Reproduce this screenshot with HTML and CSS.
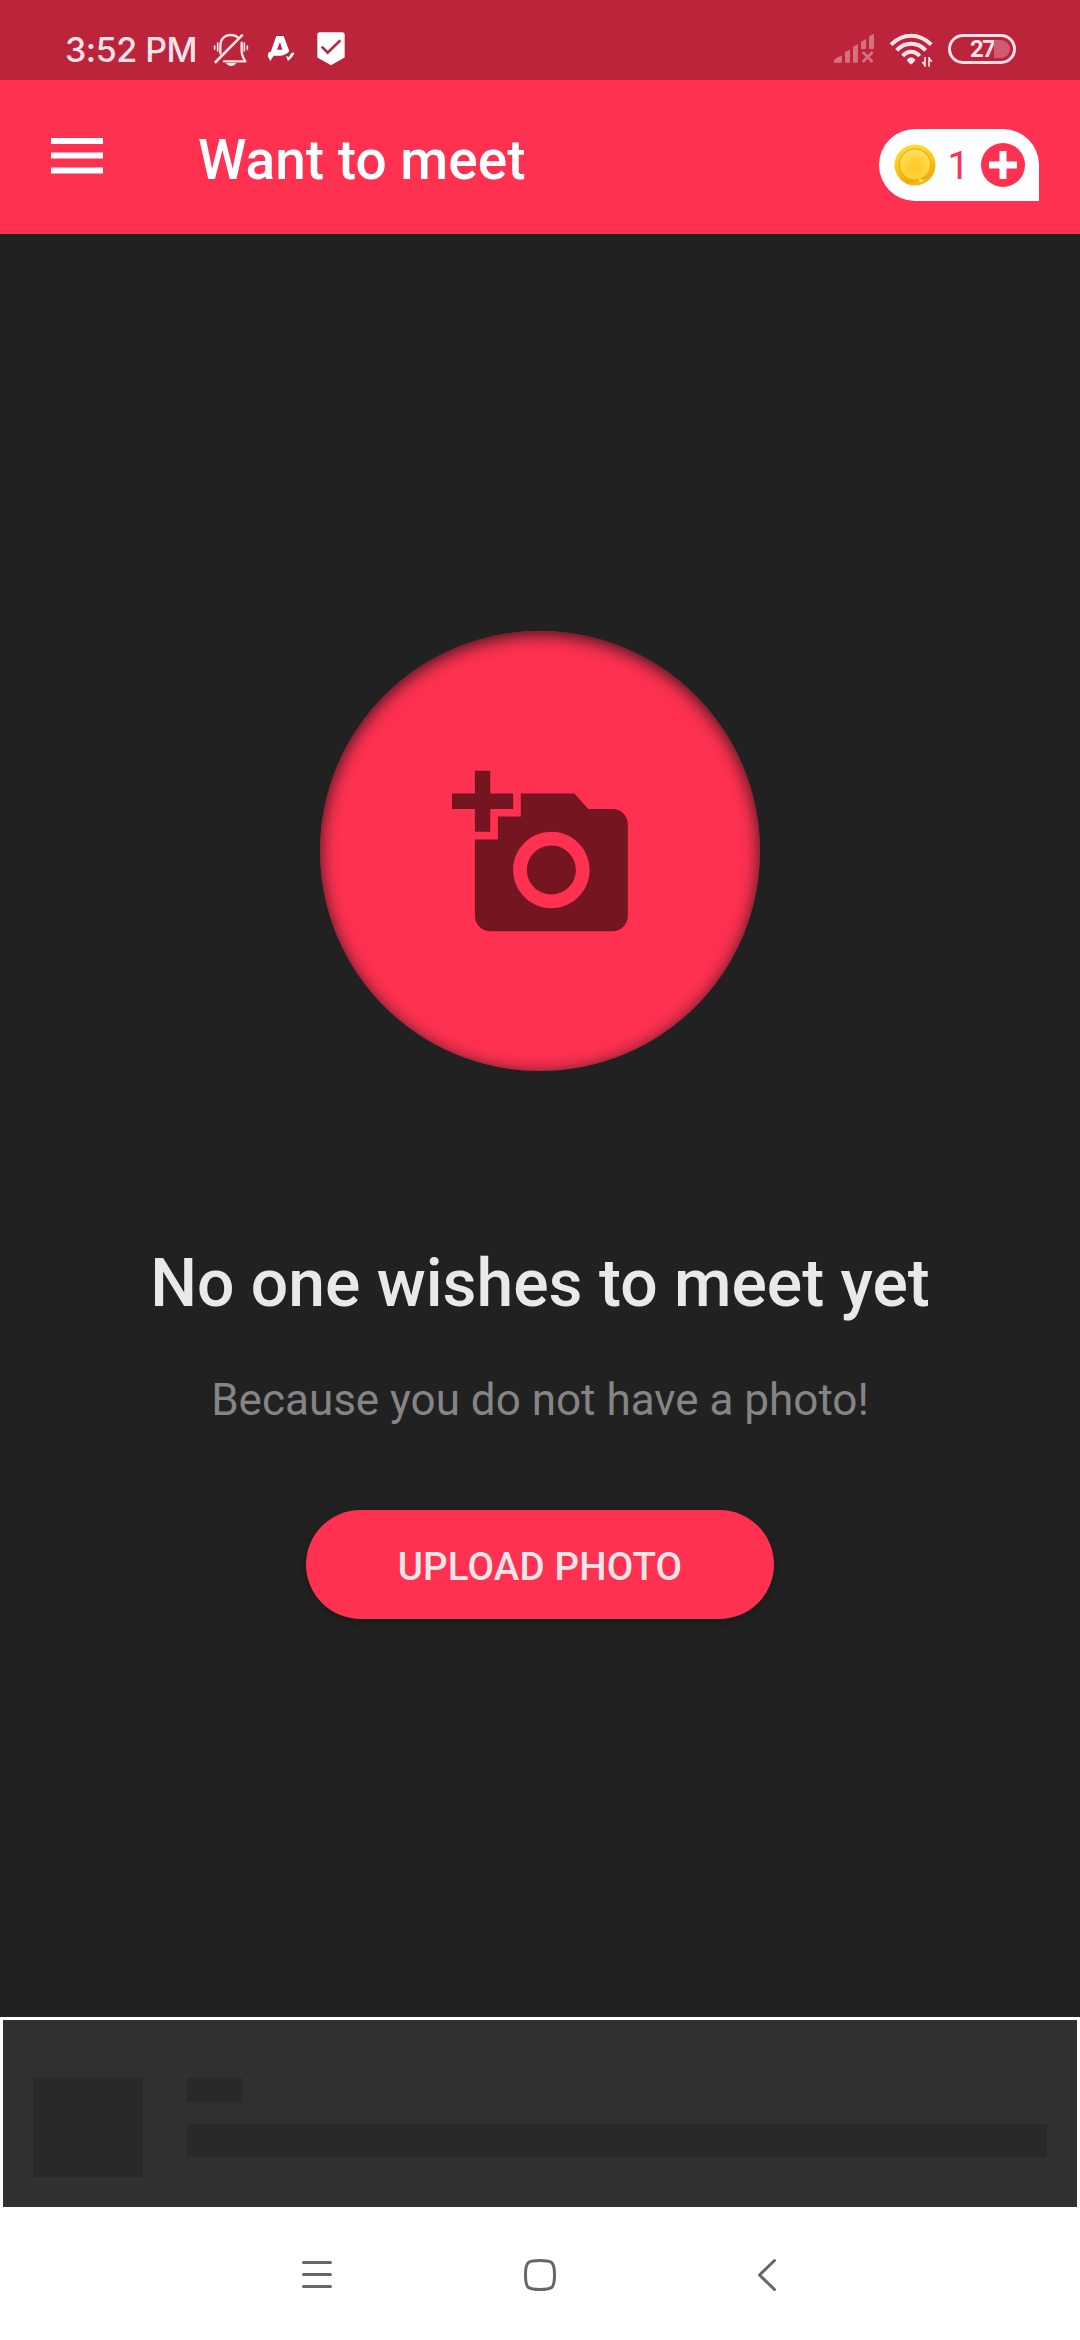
FILE: index.html
```html
<!DOCTYPE html>
<html lang="en">
<head>
<meta charset="utf-8">
<title>Want to meet</title>
<link rel="stylesheet" href="styles.css">
</head>
<body>
<div class="screen">
  <div class="status-bar">
    <div class="status-left">
      <span class="clock">3:52 PM</span>
      <svg class="icon-bell" viewBox="516 90 114 114" fill="none" stroke="#fde3e8" stroke-width="7" stroke-linecap="round" stroke-linejoin="round">
        <path d="M541 160V138C541 118 553 105 573 105C581 105 587 107 592 111M605 128V154C605 167 609 173 616 184H552"/>
        <path d="M527 186L606 106" stroke-width="8"/>
        <path d="M524 138v10M533 129v24M613 129v24M622 138v10" stroke-width="5"/>
        <path d="M558 189H589Q584 198 573 198Q563 198 558 189z" fill="#fde3e8" stroke="none"/>
      </svg>
      <svg class="icon-app" viewBox="678 90 90 114" fill="#fff">
        <path fill-rule="evenodd" d="M709 108H731L748 154Q738 166 722 167H701L691 183L683 168L686 157L692 156zM720 126L711 149H727z"/>
        <path d="M738 168L747 171L755 158H764L756 172L744 183z"/>
      </svg>
      <svg class="icon-shield" viewBox="828 90 90 114">
        <path d="M840 97H906Q914 97 914 105V170Q914 173 910 175L873 196L836 175Q832 173 832 170V105Q832 97 840 97z" fill="#fff"/>
        <path d="M845 140L863 158L901 121" fill="none" stroke="#bb243b" stroke-width="8"/>
      </svg>
    </div>
    <div class="status-right">
      <svg class="icon-signal" viewBox="99 90 126 114" fill="#d66f80">
        <path d="M102 188V180Q112 169 126 167V185Q126 188 123 188zM135 188V156L150 149V185Q150 188 147 188zM159 188V140L174 132V185Q174 188 171 188zM183 147V125L198 117V144Q198 147 195 147zM207 147V109L222 101V144Q222 147 219 147z"/>
        <path d="M188 156L218 186M218 156L188 186" stroke="#d66f80" stroke-width="8" fill="none"/>
      </svg>
      <svg class="icon-wifi" viewBox="267 90 135 114" fill="none" stroke="#fde3e8" stroke-width="12">
        <path d="M273 134Q300 107 333 107Q367 107 394 134M290 151Q308 131 333 131Q359 131 377 151M308 168Q319 155 333 155Q348 155 359 168"/>
        <path d="M320 180Q326 172 333 172Q341 172 347 180L336 192Q333 194 330 192z" fill="#fde3e8" stroke="none"/>
        <path d="M375 171V200M387 171V200M367 185L375 196M395 185L387 174" stroke-width="5"/>
      </svg>
      <div class="battery"><span class="battery-level">27</span><span class="battery-fill"></span></div>
    </div>
  </div>

  <header class="app-bar">
    <svg class="menu" viewBox="0 0 48 36" preserveAspectRatio="none" fill="#fff"><path d="M0 0H48V6H0zM0 14.500H48V20.500H0zM0 29.500H48V35.500H0z"/></svg>
    <h1 class="title">Want to meet</h1>
    <div class="coins">
      <svg class="coin" viewBox="0 0 42 42">
        <defs>
          <linearGradient id="rim" x1="0.3" y1="0" x2="0.6" y2="1"><stop offset="0" stop-color="#ffe03a"/><stop offset=".5" stop-color="#fbc512"/><stop offset=".85" stop-color="#f3a80e"/><stop offset="1" stop-color="#fbc21c"/></linearGradient>
          <radialGradient id="face" cx=".5" cy=".65" r=".65"><stop offset="0" stop-color="#ffc928"/><stop offset=".5" stop-color="#ffd23a"/><stop offset="1" stop-color="#ffe566"/></radialGradient>
        </defs>
        <circle cx="21" cy="21" r="20.5" fill="url(#rim)"/>
        <circle cx="21" cy="20.5" r="15.6" fill="url(#face)" stroke="#f0b010" stroke-width="1.2"/>
        <ellipse cx="27" cy="36.500" rx="2.200" ry="1.300" fill="#ffec8a"/>
      </svg>
      <span class="coin-count">1</span>
      <svg class="add" viewBox="0 0 44 44"><circle cx="22" cy="22" r="22" fill="#ff3151"/><path d="M18.5 8h7v10.500h10.500v7h-10.500v10.500h-7v-10.500h-10.500v-7h10.500z" fill="#fff"/></svg>
    </div>
  </header>

  <main class="content">
    <div class="photo-circle">
      <svg class="camera" viewBox="0 0 24 24" fill="#741521"><path fill-rule="evenodd" d="M3 4V1h2v3h3v2H5v3H3V6H0V4h3zm3 6V7h3V4h7l1.83 2H21c1.1 0 2 .9 2 2v12c0 1.100-.9 2-2 2H5c-1.100 0-2-.9-2-2V10h3zm7 9c2.760 0 5-2.240 5-5s-2.240-5-5-5-5 2.240-5 5 2.240 5 5 5zm-3.200-5c0 1.770 1.430 3.200 3.200 3.200s3.200-1.430 3.200-3.200-1.430-3.200-3.200-3.200-3.200 1.430-3.200 3.200z"/></svg>
    </div>
    <h2 class="headline">No one wishes to meet yet</h2>
    <p class="reason">Because you do not have a photo!</p>
    <button class="upload">UPLOAD PHOTO</button>
  </main>

  <div class="ad">
    <div class="ad-thumb"></div>
    <div class="ad-lines">
      <div class="ad-label"></div>
      <div class="ad-text"></div>
    </div>
  </div>

  <nav class="nav-bar">
    <svg viewBox="0 0 48 36" fill="none" stroke="#676767" stroke-width="3" stroke-linecap="round"><path d="M10.500 5.500H37.500M10.500 17.500H37.500M10.500 29.500H37.500"/></svg>
    <svg viewBox="0 0 48 36" fill="none" stroke="#676767" stroke-width="3"><path d="M24 3.500C36.500 3.500 38.500 5 38.500 18S36.500 32.500 24 32.500S9.500 31 9.500 18S11.500 3.500 24 3.500z"/></svg>
    <svg viewBox="0 0 48 36" fill="none" stroke="#676767" stroke-width="3" stroke-linecap="round" stroke-linejoin="round"><path d="M35.500 3.500L20.500 18L35.500 32.500"/></svg>
  </nav>
</div>
</body>
</html>
```

FILE: styles.css
```css
* { box-sizing: border-box; }
body { margin: 0; font-family: Roboto, "Liberation Sans", sans-serif; }
h1, h2, p { margin: 0; white-space: nowrap; }
svg { display: block; flex: none; }

.screen {
  width: 1080px;
  height: 2340px;
  display: flex;
  flex-direction: column;
  overflow: hidden;
  background: #212121;
}

.status-bar {
  height: 80px;
  flex: none;
  display: flex;
  justify-content: space-between;
  padding: 30px 64px 0 65px;
  background: #bb243b;
}
.status-left, .status-right { display: flex; height: 38px; }
.clock {
  width: 147px;
  font: 500 34px/40px Inter, sans-serif;
  letter-spacing: -0.5px;
  color: #fde3e8;
  white-space: nowrap;
}
.icon-bell { width: 38px; height: 38px; }
.icon-app { width: 30px; height: 38px; margin-left: 16px; }
.icon-shield { width: 30px; height: 38px; margin-left: 20px; }
.icon-signal { width: 42px; height: 38px; }
.icon-wifi { width: 45px; height: 38px; margin-left: 14px; }
.battery {
  width: 68px;
  height: 30px;
  margin: 4px 0 0 14px;
  border: 3px solid #fde3e8;
  border-radius: 15px;
  display: flex;
  align-items: center;
  padding-left: 19px;
}
.battery-level {
  width: 24px;
  font-size: 24px;
  font-weight: 700;
  line-height: 24px;
  letter-spacing: -1.6px;
  color: #fde3e8;
}
.battery-fill {
  width: 16px;
  height: 18px;
  border-radius: 0 9px 9px 0;
  background: #d05a6e;
}

.app-bar {
  height: 154px;
  flex: none;
  display: flex;
  align-items: flex-start;
  padding: 0 41px 0 48px;
  padding-left: 51px;
  background: #ff3151;
}
.menu { width: 52px; height: 36px; margin-top: 58px; }
.title {
  margin: 48px 0 0 95px;
  font-size: 55px;
  font-weight: 500;
  line-height: 64px;
  color: #fff;
}
.coins {
  width: 160px;
  height: 72px;
  margin: 49px 0 0 auto;
  padding: 0 14px 0 15px;
  display: flex;
  align-items: center;
  background: #fff;
  border-radius: 36px 36px 0 36px;
}
.coin { width: 42px; height: 42px; }
.coin-count {
  flex: 1;
  padding-top: 2px;
  text-align: center;
  font-size: 39px;
  line-height: 46px;
  color: #ff3151;
}
.add { width: 44px; height: 44px; }

.content {
  height: 1783px;
  flex: none;
  display: flex;
  flex-direction: column;
  align-items: center;
  padding-top: 397px;
}
.photo-circle {
  width: 440px;
  height: 440px;
  flex: none;
  padding: 132px 0 0 132px;
  border-radius: 50%;
  background: #ff3151;
  box-shadow: inset 0 3px 17px rgba(28, 18, 22, .9);
}
.camera { width: 183.500px; height: 183.500px; }
.headline {
  margin-top: 174px;
  font-size: 66px;
  font-weight: 500;
  line-height: 78px;
  color: #e9e9e9;
}
.reason {
  margin-top: 51px;
  font-size: 44px;
  line-height: 52px;
  color: #858585;
}
.upload {
  width: 468px;
  height: 109px;
  margin-top: 84px;
  padding: 4px 0 0;
  border: 0;
  border-radius: 55px;
  background: #ff3151;
  box-shadow: 0 3px 7px rgba(0, 0, 0, .25);
  font: 500 38.500px/46px Roboto, sans-serif;
  letter-spacing: 0.15px;
  color: #f2e4e7;
}

.ad {
  height: 190px;
  flex: none;
  display: flex;
  gap: 44px;
  padding: 58px 30px 0;
  border: 3px solid #fff;
  border-bottom: 0;
  background: #303030;
}
.ad-thumb { width: 110px; height: 99px; background: #28292b; }
.ad-lines { flex: 1; display: flex; flex-direction: column; gap: 22px; }
.ad-label { width: 55px; height: 24px; background: #28292b; }
.ad-text { height: 33px; background: #28292b; }

.nav-bar {
  height: 133px;
  flex: none;
  display: flex;
  justify-content: space-between;
  padding: 50px 293px 0;
  background: #fff;
}
.nav-bar svg { width: 48px; height: 36px; }
```
